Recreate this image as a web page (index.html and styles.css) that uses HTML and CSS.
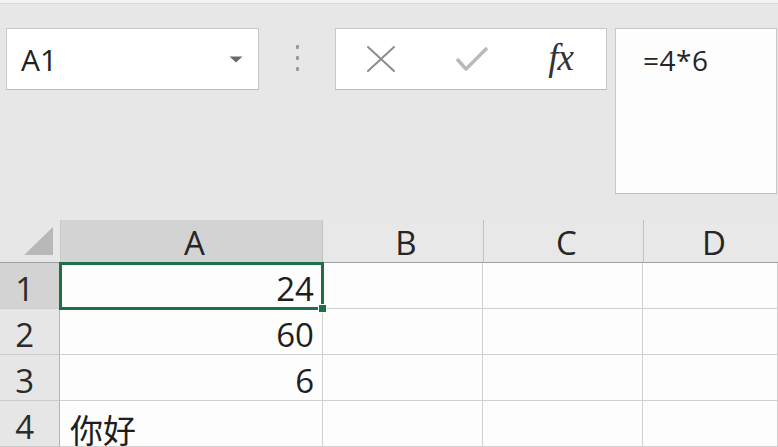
FILE: index.html
```html
<!DOCTYPE html>
<html lang="zh">
<head>
<meta charset="utf-8">
<title>Sheet</title>
<link rel="stylesheet" href="styles.css">
</head>
<body>
<div class="app">
  <div class="topline"></div>
  <div class="toolbar">
    <div class="namebox">
      <span class="name">A1</span>
      <svg class="caret" width="14" height="7" viewBox="0 0 14 7"><path d="M0.5 0.5 H13.5 L7 6.5 Z" fill="#6b6b6b"/></svg>
    </div>
    <div class="grip">
      <span class="dot"></span><span class="dot"></span><span class="dot"></span>
    </div>
    <div class="fbtns">
      <svg class="ico" width="30" height="28" viewBox="0 0 30 28"><path d="M2 2 L28 26 M28 2 L2 26" stroke="#8c8c8c" stroke-width="2" fill="none" stroke-linecap="round"/></svg>
      <svg class="ico" width="34" height="28" viewBox="0 0 34 28"><path d="M2 14 L11 24 L32 3" stroke="#b9b9b9" stroke-width="3.4" fill="none" stroke-linejoin="round"/></svg>
      <span class="fx">fx</span>
    </div>
    <div class="formula"><span class="ftext">=4*6</span></div>
  </div>
  <div class="sheet">
    <div class="corner"><svg width="29" height="28" viewBox="0 0 29 28"><path d="M0 28 L29 0 L29 28 Z" fill="#b8b8b8"/></svg></div>
    <div class="colh sel">A</div>
    <div class="colh">B</div>
    <div class="colh">C</div>
    <div class="colh">D</div>

    <div class="rowh sel">1</div>
    <div class="cell num active">24<span class="handle"></span></div>
    <div class="cell"></div><div class="cell"></div><div class="cell"></div>

    <div class="rowh">2</div>
    <div class="cell num">60</div>
    <div class="cell"></div><div class="cell"></div><div class="cell"></div>

    <div class="rowh">3</div>
    <div class="cell num">6</div>
    <div class="cell"></div><div class="cell"></div><div class="cell"></div>

    <div class="rowh">4</div>
    <div class="cell txt">你好</div>
    <div class="cell"></div><div class="cell"></div><div class="cell"></div>
  </div>
</div>
</body>
</html>
```

FILE: styles.css
```css
* { box-sizing: border-box; }
html, body { margin: 0; padding: 0; }
body {
  width: 778px;
  height: 447px;
  overflow: hidden;
  font-family: "Open Sans", "Noto Sans CJK SC", sans-serif;
  color: #262626;
}
.app {
  width: 778px;
  height: 447px;
  background: #e7e7e7;
  display: flex;
  flex-direction: column;
}
.topline {
  height: 4px;
  background: #f3f3f3;
  border-bottom: 1px solid #d6d6d6;
}
.toolbar {
  display: flex;
  align-items: flex-start;
  padding: 24px 0 0 6px;
  height: 217px;
}
.namebox {
  width: 253px;
  height: 62px;
  background: #fff;
  border: 1px solid #c9c9c9;
  border-bottom-color: #bdbdbd;
  display: flex;
  align-items: center;
  justify-content: space-between;
  padding: 0 15px 0 14px;
}
.name {
  font-size: 30px;
  line-height: 1;
  color: #222;
  padding-top: 2px;
}
.caret { margin-top: 2px; }
.grip {
  width: 76px;
  height: 62px;
  display: flex;
  flex-direction: column;
  align-items: center;
  justify-content: center;
  gap: 7px;
  padding-bottom: 2px;
}
.dot {
  width: 3px;
  height: 4px;
  background: #9a9a9a;
  border-radius: 1px;
}
.fbtns {
  width: 272px;
  height: 62px;
  background: #fff;
  border: 1px solid #c9c9c9;
  border-bottom-color: #bdbdbd;
  display: flex;
  align-items: center;
  padding: 0 33px 0 30px;
  justify-content: space-between;
}
.fx {
  font-family: "Liberation Serif", "DejaVu Serif", serif;
  font-style: italic;
  font-size: 37px;
  line-height: 1;
  color: #333;
  letter-spacing: -1px;
  padding-bottom: 2px;
}
.formula {
  margin-left: 8px;
  width: 162px;
  height: 166px;
  background: #fdfdfe;
  border: 1px solid #c9c9c9;
  border-bottom-color: #bdbdbd;
  padding: 17px 0 0 27px;
}
.ftext {
  font-size: 28px;
  line-height: 1;
  color: #262626;
  letter-spacing: 0.5px;
}
.sheet {
  display: grid;
  grid-template-columns: 60px 263px 160px 160px 1fr;
  grid-template-rows: 43px 46px 46px 46px 46px;
  font-size: 33px;
  line-height: 1;
}
.corner {
  display: flex;
  align-items: flex-end;
  justify-content: flex-end;
  padding: 0 7px 7px 0;
  border-bottom: 1px solid #9e9e9e;
  background: #e7e7e7;
}
.colh {
  background: #e8e8e8;
  border-left: 1px solid #c2c2c2;
  border-bottom: 1px solid #9e9e9e;
  display: flex;
  align-items: flex-end;
  justify-content: center;
  padding: 0 0 3px 6px;
  color: #262626;
}
.colh.sel {
  background: #d3d3d3;
  border-left-color: #c8c8c8;
  border-right: 1px solid #c2c2c2;
}
.colh.sel + .colh { border-left: none; }
.rowh {
  background: #e6e6e6;
  border-right: 1px solid #b4b4b4;
  border-bottom: 1px solid #cbcbcb;
  display: flex;
  align-items: flex-end;
  justify-content: flex-end;
  padding: 0 25px 3px 0;
  color: #2b2b2b;
}
.rowh.sel { background: #d3d3d3; }
.cell {
  background: #fdfdfd;
  border-right: 1px solid #d0d0d0;
  border-bottom: 1px solid #d0d0d0;
  display: flex;
  align-items: flex-end;
  padding: 0 8px 3px 10px;
  color: #1e1e1e;
}
.cell.num { justify-content: flex-end; }
.cell.txt {
  font-family: "Noto Sans CJK SC", sans-serif;
  padding-bottom: 0;
  font-size: 33px;
  align-items: flex-end;
}
.cell.active { position: relative; }
.cell.active::after {
  content: "";
  position: absolute;
  left: -1px;
  top: -1px;
  right: -2px;
  bottom: -2px;
  border: 3px solid #1f6e48;
  pointer-events: none;
}
.handle {
  position: absolute;
  right: -5px;
  bottom: -5px;
  width: 9px;
  height: 9px;
  background: #1f6e48;
  border: 1px solid #fff;
  z-index: 2;
}
```
